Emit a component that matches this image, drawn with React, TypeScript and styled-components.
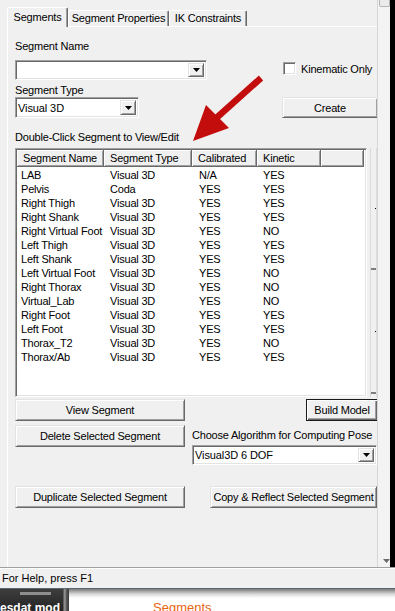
import React from "react";
import styled, { createGlobalStyle } from "styled-components";

const Global = createGlobalStyle`
  html, body { margin: 0; padding: 0; background: #f0f0f0; }
  body {
    font-family: "Liberation Sans", Arial, sans-serif;
    font-size: 11px;
    letter-spacing: -0.2px;
    color: #000;
  }
  * { box-sizing: border-box; }
`;

const Screen = styled.div`
  position: relative;
  width: 395px;
  height: 611px;
  overflow: hidden;
  display: flex;
  flex-direction: column;
  background: #f0f0f0;
`;

const Main = styled.div`
  display: flex;
  height: 567px;
`;

const Dialog = styled.div`
  width: 377px;
  overflow: hidden;
  padding: 7px 0 0 7px;
  display: flex;
  flex-direction: column;
`;

const TabStrip = styled.div`
  display: flex;
  align-items: flex-end;
  height: 19px;
  position: relative;
  z-index: 1;
`;

const Tab = styled.div<{ $active?: boolean; $w: number }>`
  width: ${(p) => p.$w}px;
  height: ${(p) => (p.$active ? 20 : 16)}px;
  margin-bottom: ${(p) => (p.$active ? -1 : 0)}px;
  background: #f0f0f0;
  border-top: 1px solid #fff;
  border-left: 1px solid #fff;
  border-right: 1px solid #696969;
  box-shadow: inset -1px 0 0 #a0a0a0;
  border-radius: 2px 2px 0 0;
  text-align: center;
  line-height: 13px;
  padding-top: ${(p) => (p.$active ? 3 : 1)}px;
  white-space: nowrap;
`;

const Panel = styled.div`
  flex: 1;
  width: 373px;
  border-top: 1px solid #fff;
  border-left: 1px solid #fff;
  padding: 13px 0 0 7px;
  display: flex;
  flex-direction: column;
`;

const Label = styled.div<{ $mt?: number }>`
  line-height: 13px;
  margin-top: ${(p) => p.$mt ?? 0}px;
  white-space: nowrap;
`;

const Row = styled.div<{ $mt?: number; $align?: string }>`
  display: flex;
  align-items: ${(p) => p.$align ?? "flex-end"};
  margin-top: ${(p) => p.$mt ?? 0}px;
`;

const Col = styled.div<{ $w?: number; $ml?: number }>`
  display: flex;
  flex-direction: column;
  width: ${(p) => (p.$w ? `${p.$w}px` : "auto")};
  margin-left: ${(p) => p.$ml ?? 0}px;
`;

const Combo = styled.div<{ $w: number; $h: number; $mt?: number }>`
  width: ${(p) => p.$w}px;
  height: ${(p) => p.$h}px;
  margin-top: ${(p) => p.$mt ?? 0}px;
  display: flex;
  background: #fff;
  border: 1px solid;
  border-color: #a0a0a0 #fff #fff #a0a0a0;
  box-shadow: inset 1px 1px 0 #696969, inset -1px -1px 0 #e3e3e3;
  padding: 2px;
`;

const ComboText = styled.div`
  flex: 1;
  display: flex;
  align-items: center;
  padding-left: 0;
  white-space: nowrap;
  letter-spacing: -0.1px;
`;

const DropBtn = styled.div`
  width: 16px;
  background: #f0f0f0;
  border: 1px solid;
  border-color: #e3e3e3 #696969 #696969 #e3e3e3;
  box-shadow: inset 1px 1px 0 #fff, inset -1px -1px 0 #a0a0a0;
  display: flex;
  align-items: center;
  justify-content: center;
`;

const Arrow = () => (
  <svg width="7" height="4" viewBox="0 0 7 4">
    <polygon points="0,0 7,0 3.5,4" fill="#000" />
  </svg>
);

const CheckGroup = styled.div<{ $ml: number; $mb: number }>`
  display: flex;
  align-items: center;
  margin-left: ${(p) => p.$ml}px;
  margin-bottom: ${(p) => p.$mb}px;
  white-space: nowrap;
`;

const CheckBox = styled.div`
  width: 13px;
  height: 13px;
  background: #fff;
  border: 1px solid;
  border-color: #a0a0a0 #fff #fff #a0a0a0;
  box-shadow: inset 1px 1px 0 #696969, inset -1px -1px 0 #e3e3e3;
  margin-right: 5px;
`;

const Button = styled.div<{ $w: number; $h?: number; $ml?: number; $default?: boolean }>`
  width: ${(p) => p.$w}px;
  height: ${(p) => p.$h ?? 22}px;
  margin-left: ${(p) => p.$ml ?? 0}px;
  flex-shrink: 0;
  display: flex;
  align-items: center;
  justify-content: center;
  background: #f0f0f0;
  white-space: nowrap;
  border: 1px solid;
  border-color: ${(p) => (p.$default ? "#1a1a1a" : "#e3e3e3 #696969 #696969 #e3e3e3")};
  box-shadow: ${(p) =>
    p.$default
      ? "inset 1px 1px 0 #fff, inset -1px -1px 0 #696969, inset -2px -2px 0 #a0a0a0"
      : "inset 1px 1px 0 #fff, inset -1px -1px 0 #a0a0a0"};
`;

const ListRow = styled.div`
  display: flex;
  margin-top: 4px;
  height: 249px;
`;

const ListView = styled.div`
  width: 352px;
  height: 249px;
  background: #fff;
  border: 1px solid;
  border-color: #a0a0a0 #fff #fff #a0a0a0;
  box-shadow: inset 1px 1px 0 #696969, inset -1px -1px 0 #e3e3e3;
  padding: 1px 2px 2px 1px;
  display: flex;
  flex-direction: column;
`;

const cols = "87px 88px 65px 64px 1fr";

const HeaderRow = styled.div`
  display: grid;
  grid-template-columns: ${cols};
  height: 17px;
`;

const HeaderCell = styled.div`
  background: #f0f0f0;
  border-right: 1px solid #696969;
  border-bottom: 1px solid #696969;
  box-shadow: inset 1px 1px 0 #fff, inset -1px -1px 0 #a0a0a0;
  line-height: 16px;
  padding-left: 6px;
  white-space: nowrap;
  overflow: hidden;
`;

const Rows = styled.div`
  padding-top: 1px;
`;

const DataRow = styled.div`
  display: grid;
  grid-template-columns: ${cols};
  height: 14px;
  line-height: 14px;
`;

const Cell = styled.div<{ $pad: number }>`
  padding-left: ${(p) => p.$pad}px;
  white-space: nowrap;
  overflow: hidden;
`;

const SideStrip = styled.div`
  width: 7px;
  margin-left: 3px;
  border-left: 1px solid #dadada;
  border-right: 1px solid #dcdcdc;
  background: #f0f0f0;
  display: flex;
  flex-direction: column;
`;

const StripTrack = styled.div`
  height: 120px;
  display: flex;
  justify-content: flex-end;
  padding-top: 60px;
`;

const StripThumb = styled.div`
  flex: 1;
  margin-bottom: 3px;
  border-top: 2px solid #7e7e7e;
  border-bottom: 2px solid #7e7e7e;
  display: flex;
  justify-content: flex-end;
  padding-top: 61px;
`;

const Dot = styled.div`
  width: 1px;
  height: 1px;
  background: #000;
`;

const VScroll = styled.div`
  width: 13px;
  border-left: 1px solid #d6d6d6;
  background: #f3f3f3;
  display: flex;
  flex-direction: column;
  justify-content: space-between;
  align-items: center;
  padding-bottom: 4px;
`;

const ScrollThumb = styled.div`
  width: 11px;
  height: 7px;
  background: #eaeaea;
  border: 1px solid #b4b4b4;
  border-top: none;
  border-radius: 0 0 2px 2px;
`;

const DownArrow = () => (
  <svg width="7" height="4" viewBox="0 0 7 4" style={{ marginLeft: 4 }}>
    <polygon points="0,0 7,0 3.5,4" fill="#6a6a6a" />
  </svg>
);

const BlackEdge = styled.div`
  width: 5px;
  background: #000;
`;

const StatusBar = styled.div`
  height: 21px;
  border-top: 1px solid #a0a0a0;
  box-shadow: inset 0 1px 0 #fff;
  padding: 4px 0 0 2px;
  line-height: 13px;
  letter-spacing: 0;
`;

const Taskbar = styled.div`
  height: 23px;
  display: flex;
  flex-direction: column;
`;

const TaskStripe = styled.div`
  height: 5px;
  background: linear-gradient(
    90deg,
    #46525f 0px,
    #5f6f81 12px,
    #9fbad6 20px,
    #8eaac8 40px,
    #2a3644 50px,
    #1c2530 56px,
    #7f9dbd 64px,
    #b6d3f0 80px,
    #b3d0ee 100%
  );
  border-top: 1px solid #5a6672;
`;

const TaskBody = styled.div`
  flex: 1;
  display: flex;
`;

const TaskLeft = styled.div`
  width: 63px;
  background: linear-gradient(#3d3d3d, #202020);
  overflow: hidden;
  display: flex;
  flex-direction: column;
`;

const Grip = styled.div`
  width: 31px;
  height: 3px;
  margin: 3px 0 0 20px;
  background: #8e8e8e;
`;

const TaskLeftText = styled.div`
  color: #fff;
  font-size: 12px;
  font-weight: bold;
  line-height: 14px;
  margin-top: 6px;
  white-space: nowrap;
  letter-spacing: 0;
`;

const TaskSep = styled.div`
  width: 6px;
  background: linear-gradient(90deg, #4a4a4a, #9a9a9a 30%, #555 60%, #3a3a3a);
`;

const TaskRight = styled.div`
  flex: 1;
  background: linear-gradient(#7a7a7a 0px, #d8d8d8 5px, #fff 9px);
  overflow: hidden;
`;

const OrangeText = styled.div`
  margin: 12px 0 0 84px;
  color: #e8650f;
  font-size: 13px;
  line-height: 14px;
  white-space: nowrap;
  letter-spacing: 0;
`;

const Annotation = styled.svg`
  position: absolute;
  left: 0;
  top: 0;
  pointer-events: none;
`;

const rows: [string, string, string, string][] = [
  ["LAB", "Visual 3D", "N/A", "YES"],
  ["Pelvis", "Coda", "YES", "YES"],
  ["Right Thigh", "Visual 3D", "YES", "YES"],
  ["Right Shank", "Visual 3D", "YES", "YES"],
  ["Right Virtual Foot", "Visual 3D", "YES", "NO"],
  ["Left Thigh", "Visual 3D", "YES", "YES"],
  ["Left Shank", "Visual 3D", "YES", "YES"],
  ["Left Virtual Foot", "Visual 3D", "YES", "NO"],
  ["Right Thorax", "Visual 3D", "YES", "NO"],
  ["Virtual_Lab", "Visual 3D", "YES", "NO"],
  ["Right Foot", "Visual 3D", "YES", "YES"],
  ["Left Foot", "Visual 3D", "YES", "YES"],
  ["Thorax_T2", "Visual 3D", "YES", "NO"],
  ["Thorax/Ab", "Visual 3D", "YES", "YES"],
];

export default function App() {
  return (
    <>
      <Global />
      <Screen>
        <Main>
          <Dialog>
            <TabStrip>
              <Tab $active $w={61}>Segments</Tab>
              <Tab $w={101}>Segment Properties</Tab>
              <Tab $w={78}>IK Constraints</Tab>
            </TabStrip>
            <Panel>
              <Row>
                <Col $w={192}>
                  <Label>Segment Name</Label>
                  <Combo $w={192} $h={20} $mt={7}>
                    <ComboText />
                    <DropBtn>
                      <Arrow />
                    </DropBtn>
                  </Combo>
                </Col>
                <CheckGroup $ml={76} $mb={5}>
                  <CheckBox />
                  Kinematic Only
                </CheckGroup>
              </Row>
              <Row>
                <Col $w={124}>
                  <Label $mt={4}>Segment Type</Label>
                  <Combo $w={124} $h={21}>
                    <ComboText>Visual 3D</ComboText>
                    <DropBtn>
                      <Arrow />
                    </DropBtn>
                  </Combo>
                </Col>
                <Button $w={96} $h={21} $ml={143}>
                  Create
                </Button>
              </Row>
              <Label $mt={13}>Double-Click Segment to View/Edit</Label>
              <ListRow>
                <ListView>
                  <HeaderRow>
                    <HeaderCell>Segment Name</HeaderCell>
                    <HeaderCell>Segment Type</HeaderCell>
                    <HeaderCell>Calibrated</HeaderCell>
                    <HeaderCell>Kinetic</HeaderCell>
                    <HeaderCell />
                  </HeaderRow>
                  <Rows>
                    {rows.map((r) => (
                      <DataRow key={r[0]}>
                        <Cell $pad={4}>{r[0]}</Cell>
                        <Cell $pad={6}>{r[1]}</Cell>
                        <Cell $pad={7}>{r[2]}</Cell>
                        <Cell $pad={6}>{r[3]}</Cell>
                        <Cell $pad={0} />
                      </DataRow>
                    ))}
                  </Rows>
                </ListView>
                <SideStrip>
                  <StripTrack>
                    <Dot />
                  </StripTrack>
                  <StripThumb>
                    <Dot />
                  </StripThumb>
                </SideStrip>
              </ListRow>
              <Row $mt={2} $align="flex-start">
                <Button $w={170}>View Segment</Button>
                <Button $w={72} $ml={121} $default>
                  Build Model
                </Button>
              </Row>
              <Row $mt={4} $align="flex-start">
                <Button $w={170}>Delete Selected Segment</Button>
                <Col $ml={7}>
                  <Label $mt={4}>Choose Algorithm for Computing Pose</Label>
                  <Combo $w={185} $h={20} $mt={3}>
                    <ComboText>Visual3D 6 DOF</ComboText>
                    <DropBtn>
                      <Arrow />
                    </DropBtn>
                  </Combo>
                </Col>
              </Row>
              <Row $mt={21} $align="flex-start">
                <Button $w={170}>Duplicate Selected Segment</Button>
                <Button $w={167} $ml={25}>
                  Copy &amp; Reflect Selected Segment
                </Button>
              </Row>
            </Panel>
          </Dialog>
          <VScroll>
            <ScrollThumb />
            <DownArrow />
          </VScroll>
          <BlackEdge />
        </Main>
        <StatusBar>For Help, press F1</StatusBar>
        <Taskbar>
          <TaskStripe />
          <TaskBody>
            <TaskLeft>
              <Grip />
              <TaskLeftText>esdat mod</TaskLeftText>
            </TaskLeft>
            <TaskSep />
            <TaskRight>
              <OrangeText>Segments</OrangeText>
            </TaskRight>
          </TaskBody>
        </Taskbar>
        <Annotation width="395" height="611" viewBox="0 0 395 611">
          <line x1="261" y1="78" x2="213" y2="121" stroke="#c30d0d" strokeWidth="6.5" />
          <polygon points="193,141 229,128 206,105" fill="#c30d0d" />
        </Annotation>
      </Screen>
    </>
  );
}
